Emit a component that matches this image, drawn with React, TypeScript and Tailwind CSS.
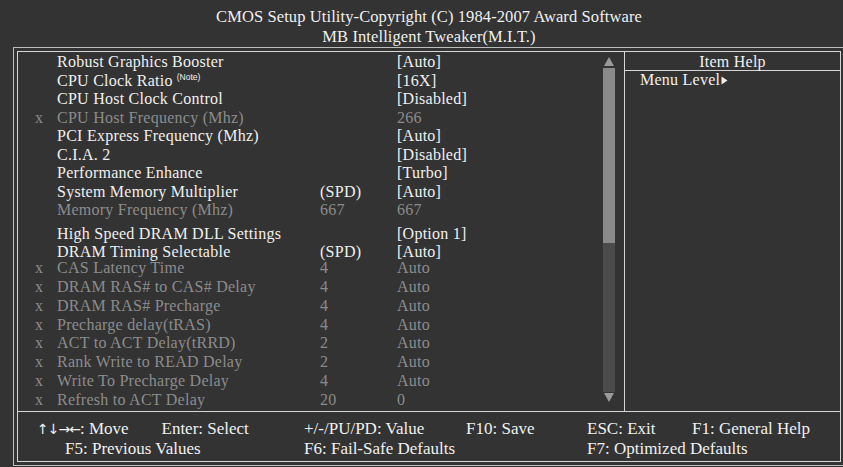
import type { ReactNode } from "react";

type Row = {
  label: string;
  mid?: string;
  value: string;
  off?: boolean;
  dim?: boolean;
  note?: boolean;
  h: string;
};

const rows: Row[] = [
  { label: "Robust Graphics Booster", value: "[Auto]", h: "h-[18.5px]" },
  { label: "CPU Clock Ratio", note: true, value: "[16X]", h: "h-[18.5px]" },
  { label: "CPU Host Clock Control", value: "[Disabled]", h: "h-[18.5px]" },
  { label: "CPU Host Frequency (Mhz)", value: "266", off: true, dim: true, h: "h-[18.5px]" },
  { label: "PCI Express Frequency (Mhz)", value: "[Auto]", h: "h-[18.5px]" },
  { label: "C.I.A. 2", value: "[Disabled]", h: "h-[18.5px]" },
  { label: "Performance Enhance", value: "[Turbo]", h: "h-[18.5px]" },
  { label: "System Memory Multiplier", mid: "(SPD)", value: "[Auto]", h: "h-[18.5px]" },
  { label: "Memory Frequency (Mhz)", mid: "667", value: "667", dim: true, h: "h-[24px]" },
  { label: "High Speed DRAM DLL Settings", value: "[Option 1]", h: "h-[18px]" },
  { label: "DRAM Timing Selectable", mid: "(SPD)", value: "[Auto]", h: "h-[16px]" },
  { label: "CAS Latency Time", mid: "4", value: "Auto", off: true, dim: true, h: "h-[18.85px]" },
  { label: "DRAM RAS# to CAS# Delay", mid: "4", value: "Auto", off: true, dim: true, h: "h-[18.85px]" },
  { label: "DRAM RAS# Precharge", mid: "4", value: "Auto", off: true, dim: true, h: "h-[18.85px]" },
  { label: "Precharge delay(tRAS)", mid: "4", value: "Auto", off: true, dim: true, h: "h-[18.85px]" },
  { label: "ACT to ACT Delay(tRRD)", mid: "2", value: "Auto", off: true, dim: true, h: "h-[18.85px]" },
  { label: "Rank Write to READ Delay", mid: "2", value: "Auto", off: true, dim: true, h: "h-[18.85px]" },
  { label: "Write To Precharge Delay", mid: "4", value: "Auto", off: true, dim: true, h: "h-[18.85px]" },
  { label: "Refresh to ACT Delay", mid: "20", value: "0", off: true, dim: true, h: "h-[18.85px]" },
];

function Arrow({ down }: { down?: boolean }) {
  return (
    <svg width="12" height="11" viewBox="0 0 12 11" className="block">
      <polygon points={down ? "1,1 11,1 6,10" : "6,1 11,10 1,10"} fill="#9a9a9a" />
    </svg>
  );
}

function Key({ w, children }: { w: string; children: ReactNode }) {
  return <span className={`${w} shrink-0 whitespace-nowrap`}>{children}</span>;
}

export default function App() {
  return (
    <div className="h-[467px] w-[843px] overflow-hidden bg-[#333333] font-['Liberation_Serif',serif] text-[#f0f0f0]">
      <div className="h-[47px] pl-[15px] pt-[7px] text-center text-[16.5px] leading-[20px] tracking-[0.1px]">
        <div>CMOS Setup Utility-Copyright (C) 1984-2007 Award Software</div>
        <div>MB Intelligent Tweaker(M.I.T.)</div>
      </div>

      <div className="ml-[13px] h-[419px] w-[840px] border-b border-l border-t border-[#bdbdbd] pl-[3px] pt-[3px]">
        <div className="h-[411px] w-[824px] border border-[#d6d6d6]">
          <div className="flex h-[360px] border-b border-[#d6d6d6]">
            <div className="w-[585px] pt-[1px] text-[16px] leading-[18.5px] tracking-[0.25px]">
              {rows.map((row) => (
                <div key={row.label} className={`flex ${row.h} ${row.dim ? "text-[#8c8c8c]" : ""}`}>
                  <span className="w-[17px] shrink-0" />
                  <span className="w-[22px] shrink-0">{row.off ? "x" : ""}</span>
                  <span className="w-[263px] shrink-0 whitespace-nowrap">
                    {row.label}
                    {row.note && (
                      <span className="relative -top-[6px] ml-[4px] font-['Liberation_Sans',sans-serif] text-[8.5px] tracking-normal">(Note)</span>
                    )}
                  </span>
                  <span className="w-[77px] shrink-0">{row.mid ?? ""}</span>
                  <span className="whitespace-nowrap">{row.value}</span>
                </div>
              ))}
            </div>

            <div className="flex w-[12px] flex-col pt-[4px]">
              <Arrow />
              <div className="mt-[1px] h-[175px] bg-[#8a8a8a]" />
              <div className="h-[149px] bg-[#4b4b4b]" />
              <Arrow down />
            </div>

            <div className="ml-[9px] w-[216px] border-l border-[#d6d6d6] text-[16px] tracking-[0.25px]">
              <div className="h-[19px] border-b border-[#d6d6d6] pt-[1px] text-center leading-[18px]">Item Help</div>
              <div className="flex items-center pl-[15px] leading-[18.5px]">
                <span>Menu Level</span>
                <svg width="7" height="9" viewBox="0 0 7 9" className="ml-[1px]">
                  <polygon points="0.5,0.5 6.5,4.5 0.5,8.5" fill="#f0f0f0" />
                </svg>
              </div>
            </div>
          </div>

          <div className="pt-[7px] text-[17px] leading-[20px]">
            <div className="flex pl-[19px]">
              <Key w="w-[124.5px]">
                <span className="font-['DejaVu_Sans',sans-serif] text-[14px] tracking-[-1px]">↑↓→←</span>: Move
              </Key>
              <Key w="w-[142.5px]">Enter: Select</Key>
              <Key w="w-[162px]">+/-/PU/PD: Value</Key>
              <Key w="w-[121px]">F10: Save</Key>
              <Key w="w-[105px]">ESC: Exit</Key>
              <Key w="w-auto">F1: General Help</Key>
            </div>
            <div className="flex pl-[47px]">
              <Key w="w-[239px]">F5: Previous Values</Key>
              <Key w="w-[283px]">F6: Fail-Safe Defaults</Key>
              <Key w="w-auto">F7: Optimized Defaults</Key>
            </div>
          </div>
        </div>
      </div>
    </div>
  );
}
